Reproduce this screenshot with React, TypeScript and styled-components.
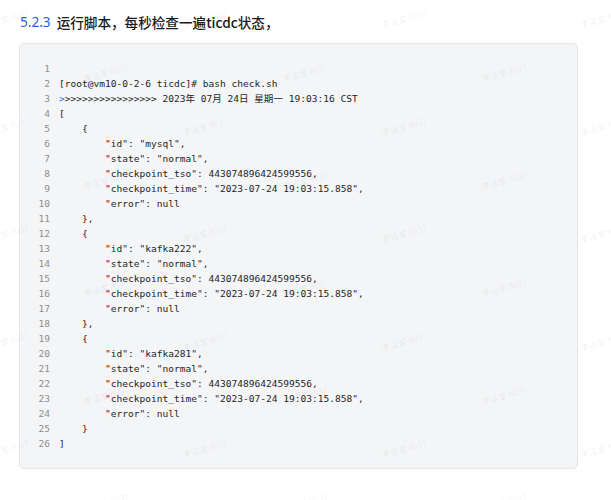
import React from "react";
import styled, { createGlobalStyle } from "styled-components";

const Global = createGlobalStyle`
  html, body { margin: 0; padding: 0; background: #fff; }
  body { font-family: "Noto Sans CJK SC", "Noto Sans", sans-serif; }
`;

const Page = styled.div`
  position: relative;
  width: 611px;
  height: 500px;
  overflow: hidden;
  padding: 12px 33px 0 19px;
  box-sizing: border-box;
`;

const Heading = styled.h3`
  margin: 0 0 11px 1px;
  font-size: 13.6px;
  line-height: 20px;
  font-weight: 500;
  color: #1a1a1a;
  display: flex;
  gap: 6px;
  font-family: "Noto Sans CJK SC", "Noto Sans", sans-serif;
`;

const Num = styled.span`
  color: #1e5fe3;
  font-weight: 400;
  font-family: "Noto Sans", "Noto Sans CJK SC", sans-serif;
`;

const CodeBox = styled.pre`
  margin: 0;
  width: 559px;
  height: 426px;
  box-sizing: border-box;
  background: #f4f5f7;
  border: 1px solid #e3e5e8;
  border-radius: 5px;
  padding: 17px 0;
  font-family: "DejaVu Sans Mono", "Noto Sans CJK SC", monospace;
  font-size: 9.55px;
  line-height: 15px;
  color: #1f1f1f;
`;

const Line = styled.div`
  display: flex;
  gap: 9px;
  height: 15px;
  white-space: pre;
`;

const LineNo = styled.span`
  width: 30px;
  text-align: right;
  color: #8e8e8e;
  flex: none;
`;

const Code = styled.span``;

const Cursor = styled.span`
  color: #2a6ef0;
`;

const Watermark = styled.div<{ $x: number; $y: number }>`
  position: absolute;
  left: ${(p) => p.$x - 26}px;
  top: ${(p) => p.$y - 6}px;
  width: 52px;
  text-align: center;
  font-size: 8.5px;
  line-height: 12px;
  white-space: nowrap;
  color: rgba(0, 0, 0, 0.075);
  transform: rotate(-16deg);
  pointer-events: none;
  font-family: "Noto Sans CJK SC", "Noto Sans", sans-serif;
`;

const Overlay = styled.div`
  position: absolute;
  inset: 0;
  pointer-events: none;
`;

const lines: string[] = [
  "",
  "[root@vm10-0-2-6 ticdc]# bash check.sh",
  ">>>>>>>>>>>>>>>>> 2023年 07月 24日 星期一 19:03:16 CST",
  "[",
  "    {",
  '        "id": "mysql",',
  '        "state": "normal",',
  '        "checkpoint_tso": 443074896424599556,',
  '        "checkpoint_time": "2023-07-24 19:03:15.858",',
  '        "error": null',
  "    },",
  "    {",
  '        "id": "kafka222",',
  '        "state": "normal",',
  '        "checkpoint_tso": 443074896424599556,',
  '        "checkpoint_time": "2023-07-24 19:03:15.858",',
  '        "error": null',
  "    },",
  "    {",
  '        "id": "kafka281",',
  '        "state": "normal",',
  '        "checkpoint_tso": 443074896424599556,',
  '        "checkpoint_time": "2023-07-24 19:03:15.858",',
  '        "error": null',
  "    }",
  "]",
];

const marks: { x: number; y: number }[] = [];
for (let k = 0; k < 5; k++) {
  const ya = 18 + 107.5 * k;
  const yb = 72 + 107.5 * k;
  [6, 205, 404, 603].forEach((x) => marks.push({ x, y: ya }));
  [106, 305, 504].forEach((x) => marks.push({ x, y: yb }));
}

export default function App() {
  return (
    <>
      <Global />
      <Page>
        <Heading>
          <Num>5.2.3</Num>
          <span>运行脚本，每秒检查一遍ticdc状态，</span>
        </Heading>
        <CodeBox>
          {lines.map((l, i) => (
            <Line key={i}>
              <LineNo>{i + 1}</LineNo>
              <Code>
                {i === 2 ? (
                  <>
                    <Cursor>&gt;</Cursor>
                    {l.slice(1)}
                  </>
                ) : (
                  l
                )}
              </Code>
            </Line>
          ))}
        </CodeBox>
        <Overlay>
          {marks.map((m, i) => (
            <Watermark key={i} $x={m.x} $y={m.y}>
              李运堂 8037
            </Watermark>
          ))}
        </Overlay>
      </Page>
    </>
  );
}
